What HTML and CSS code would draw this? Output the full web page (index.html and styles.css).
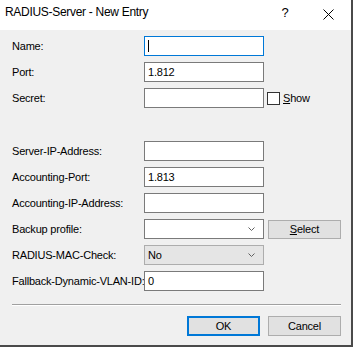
FILE: index.html
```html
<!DOCTYPE html>
<html lang="en">
<head>
  <meta charset="UTF-8">
  <title>RADIUS-Server - New Entry</title>
  <link rel="stylesheet" href="styles.css">
</head>
<body>
  <div class="window">
    <div class="titlebar">
      <span class="title">RADIUS-Server - New Entry</span>
      <span class="help">?</span>
      <span class="close">
        <svg width="11" height="11" viewBox="0 0 11 11">
          <path d="M0.5 0.5 L10.5 10.5 M10.5 0.5 L0.5 10.5" stroke="#000" stroke-width="1" fill="none"/>
        </svg>
      </span>
    </div>

    <div class="content">
      <!-- Server data -->
      <div class="form-group">
        <label>Name:</label>
        <div class="field focused"><span class="caret"></span></div>
        <div></div>

        <label>Port:</label>
        <div class="field">1.812</div>
        <div></div>

        <label>Secret:</label>
        <div class="field"></div>
        <div class="check">
          <span class="box"></span>
          <span class="check-label"><u>S</u>how</span>
        </div>
      </div>

      <!-- Accounting / backup -->
      <div class="form-group second">
        <label>Server-IP-Address:</label>
        <div class="field"></div>
        <div></div>

        <label>Accounting-Port:</label>
        <div class="field">1.813</div>
        <div></div>

        <label>Accounting-IP-Address:</label>
        <div class="field"></div>
        <div></div>

        <label>Backup profile:</label>
        <div class="field combo">
          <span></span>
          <svg class="arrow" width="7" height="4" viewBox="0 0 7 4">
            <polyline points="0.5,0.5 3.5,3.5 6.5,0.5" stroke="#606060" fill="none"/>
          </svg>
        </div>
        <button class="btn select-btn"><u>S</u>elect</button>

        <label>RADIUS-MAC-Check:</label>
        <div class="field combo readonly">
          <span>No</span>
          <svg class="arrow" width="7" height="4" viewBox="0 0 7 4">
            <polyline points="0.5,0.5 3.5,3.5 6.5,0.5" stroke="#606060" fill="none"/>
          </svg>
        </div>
        <div></div>

        <label>Fallback-Dynamic-VLAN-ID:</label>
        <div class="field">0</div>
        <div></div>
      </div>

      <div class="separator"></div>

      <div class="buttons">
        <button class="btn default">OK</button>
        <button class="btn">Cancel</button>
      </div>
    </div>
  </div>
</body>
</html>
```

FILE: styles.css
```css
/* Windows style dialog */
body {
  margin: 0;
  background: #4a4a4a;
  font-family: 'Liberation Sans', Arial, sans-serif;
  font-size: 11px;
  letter-spacing: -0.2px;
  color: #000;
}
.window {
  width: 351px;
  height: 345px;
  background: #f0f0f0;
}
.titlebar {
  height: 30px;
  background: #fff;
  display: flex;
  align-items: flex-start;
}
.title {
  flex: 1;
  font-size: 12px;
  letter-spacing: -0.3px;
  line-height: 15px;
  padding: 5px 0 0 5px;
}
.help {
  width: 40px;
  text-align: center;
  font-size: 13px;
  line-height: 15px;
  padding-top: 5px;
}
.close {
  width: 46px;
  height: 30px;
  display: flex;
  align-items: center;
  justify-content: center;
}
.close svg {
  display: block;
  margin-top: -1px;
}
.content {
  padding: 6px 10px 0 12px;
}
.form-group {
  display: grid;
  grid-template-columns: 132px 120px 1fr;
  grid-auto-rows: 20px;
  row-gap: 6px;
  align-items: center;
}
.form-group.second {
  margin-top: 33px;
}
label {
  white-space: nowrap;
}
.field {
  box-sizing: border-box;
  height: 20px;
  border: 1px solid #7a7a7a;
  background: #fff;
  padding: 0 3px;
  line-height: 18px;
}
.field.focused {
  border-color: #0078d7;
}
.caret {
  display: inline-block;
  width: 1px;
  height: 12px;
  background: #000;
  vertical-align: middle;
  margin-top: -2px;
}
.combo {
  display: flex;
  justify-content: space-between;
  align-items: center;
  padding-right: 8px;
}
.combo.readonly {
  background: #e5e5e5;
  border-color: #adadad;
}
.arrow {
  display: block;
}
.check {
  display: flex;
  align-items: center;
  margin-left: 3px;
}
.box {
  box-sizing: border-box;
  width: 13px;
  height: 13px;
  border: 1px solid #333;
  background: #fff;
}
.check-label {
  margin-left: 3px;
}
.btn {
  box-sizing: border-box;
  width: 73px;
  height: 20px;
  padding: 0;
  border: 1px solid #adadad;
  background: #e1e1e1;
  font-family: inherit;
  font-size: 11px;
  letter-spacing: -0.2px;
  color: #000;
}
.btn.default {
  border: 2px solid #0078d7;
}
.select-btn {
  margin-left: 4px;
  height: 19px;
}
.separator {
  margin-top: 13px;
  border-top: 1px solid #a0a0a0;
  border-bottom: 1px solid #fff;
}
.buttons {
  display: flex;
  justify-content: flex-end;
  gap: 8px;
  margin-top: 10px;
}
```
